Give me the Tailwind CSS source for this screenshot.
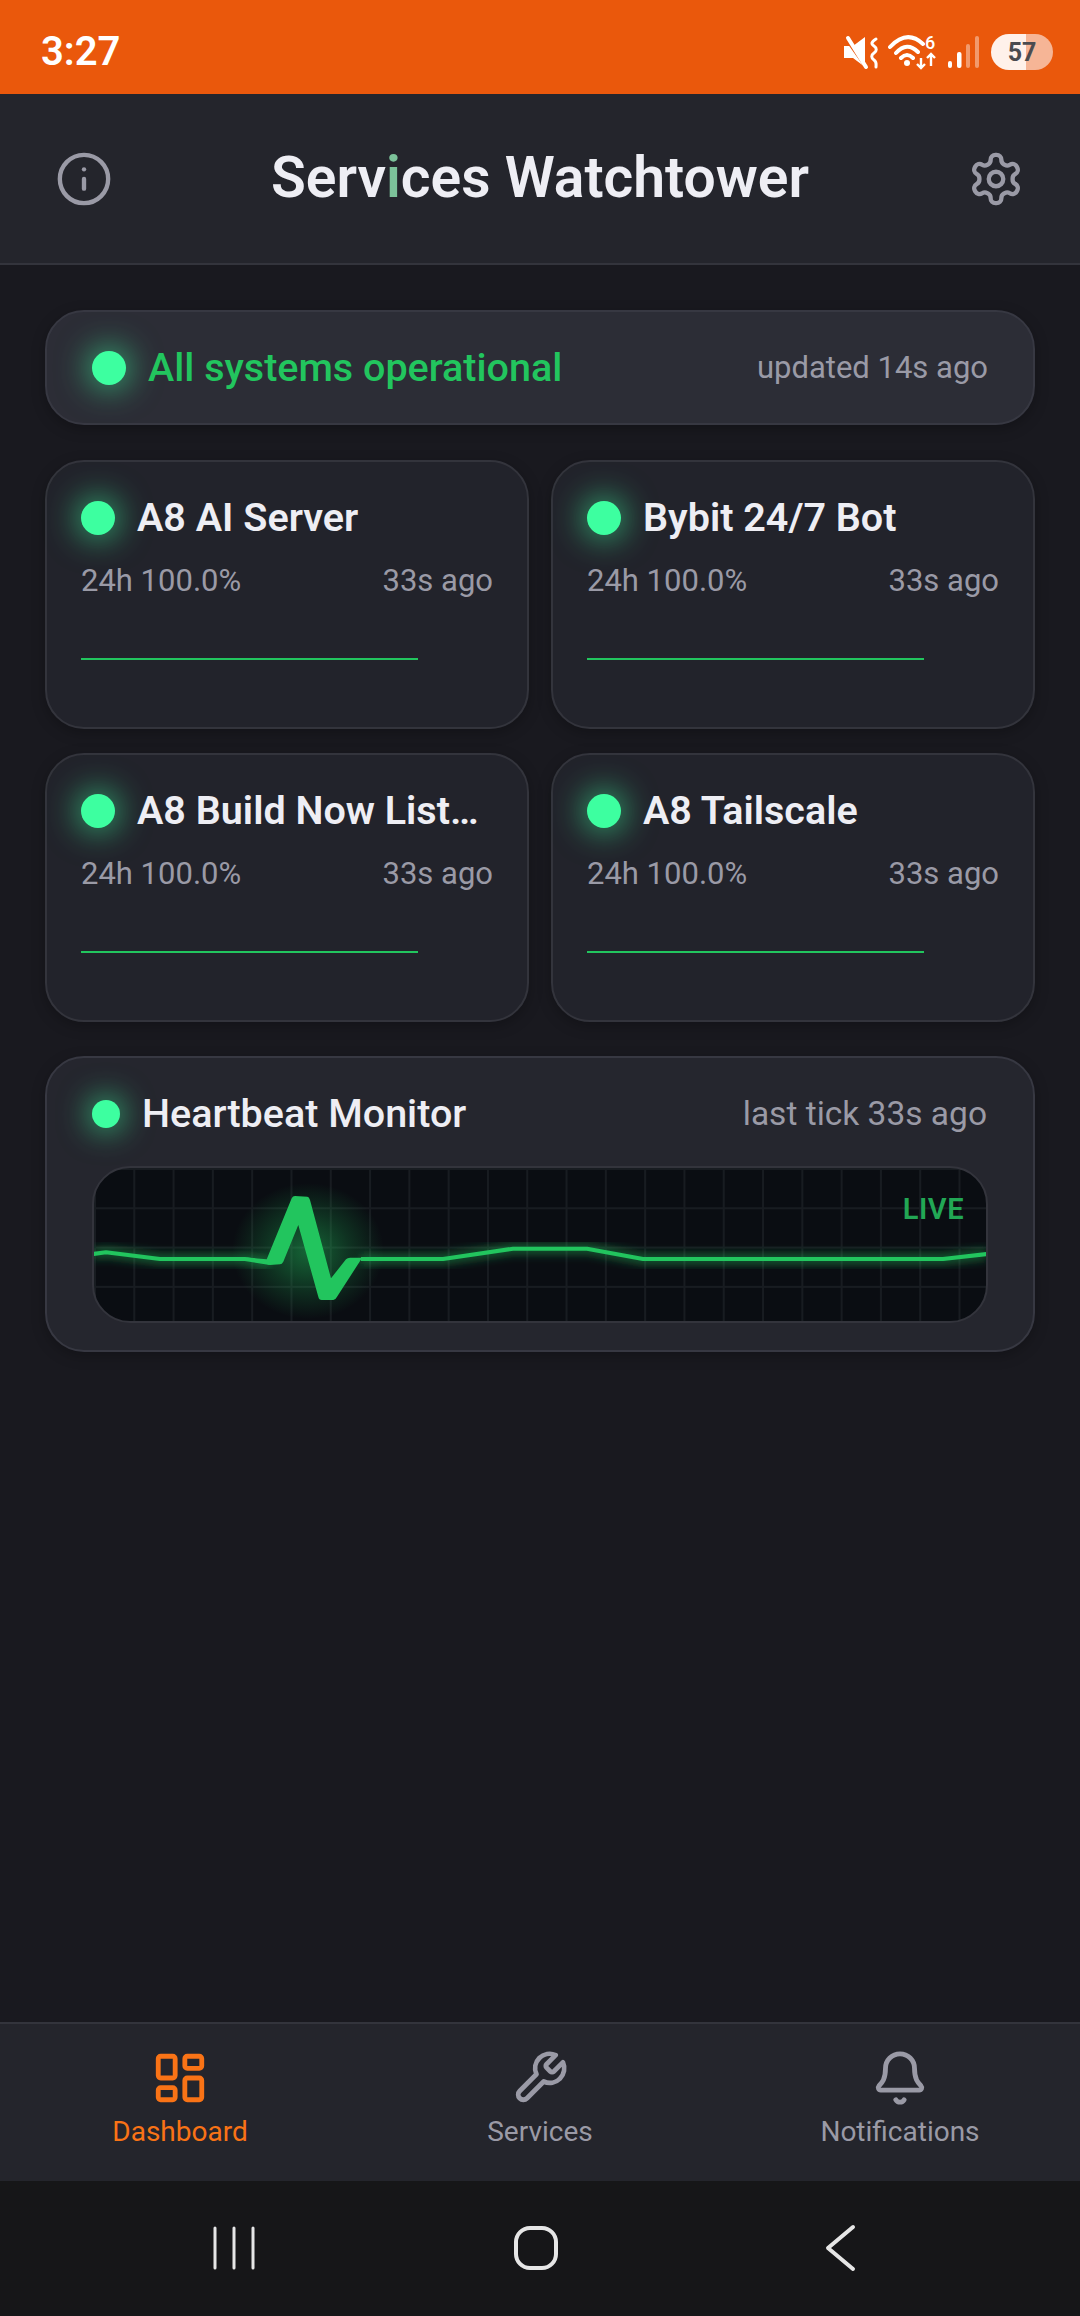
<!DOCTYPE html>
<html lang="en">
<head>
  <meta charset="UTF-8"/>
  <meta name="viewport" content="width=device-width, initial-scale=1.0"/>
  <title>Services Watchtower</title>
  <script src="https://cdn.jsdelivr.net/npm/@tailwindcss/browser@4"></script>
</head>
<body class="bg-[#19191f] font-['Roboto',sans-serif]">
<div class="flex flex-col w-[1080px] h-[2316px] overflow-hidden">

  <!-- status bar -->
  <div class="h-[94px] shrink-0 bg-[#ea580c] flex items-center justify-between pl-[41px] pr-[27px]">
    <span class="text-white text-[40px] font-semibold leading-none mt-[10px]">3:27</span>
    <div class="flex items-center gap-[8px] mt-[10px]">
      <svg width="140" height="44" viewBox="0 0 140 44" fill="none">
        <path d="M1 16h9l12-9v30l-12-9H1z" fill="#fff"/>
        <path d="M1 6l24 34" stroke="#ea580c" stroke-width="3"/>
        <path d="M5 8l18 29" stroke="#fff" stroke-width="4" stroke-linecap="round"/>
        <path d="M33 9c-5 3-5 5-2 7s3 5 0 7-3 5 0 7 2 4 2 7" stroke="#fff" stroke-width="3" stroke-linecap="round"/>
        <path d="M47 17Q64 -1 80 14M53 23Q64 11 75 22M58 28Q64 22 70 28" stroke="#fff" stroke-width="4" stroke-linecap="round"/>
        <circle cx="64" cy="33" r="3" fill="#fff"/>
        <text x="82" y="19" fill="#fff" font-size="18" font-weight="500" font-family="Roboto">6</text>
        <path d="M78 28v10M74 34l4 4 4-4M88 36V24M84 28l4-4 4 4" stroke="#fff" stroke-width="2.4"/>
        <rect x="105" y="31" width="4" height="7" rx="2" fill="#fff"/>
        <rect x="114" y="22" width="4.5" height="16" rx="2" fill="#fff"/>
        <rect x="123" y="14" width="4" height="24" rx="2" fill="#fff" fill-opacity=".4"/>
        <rect x="132" y="6" width="4" height="32" rx="2" fill="#fff" fill-opacity=".4"/>
      </svg>
      <div class="w-[62px] h-[36px] rounded-full bg-[linear-gradient(90deg,#fff1ea_56%,#f6b596_56%)] flex items-center justify-center text-[#4b4b4f] text-[25px] font-bold leading-none">57</div>
    </div>
  </div>

  <!-- header -->
  <div class="h-[171px] shrink-0 bg-[#24252c] border-b-2 border-[#33343c] flex items-center justify-between px-[55px]">
    <svg width="58" height="58" viewBox="0 0 24 24" fill="none" stroke="#9a9aa6" stroke-width="1.8" stroke-linecap="round" stroke-linejoin="round">
      <circle cx="12" cy="12" r="10"/><path d="M12 16v-4"/><path d="M12 8h.01"/>
    </svg>
    <h1 class="text-[#eeeef4] text-[57px] font-semibold leading-none mb-[2px]">Serv<span class="text-[#7cc29a]">i</span>ces Watchtower</h1>
    <svg width="58" height="58" viewBox="0 0 24 24" fill="none" stroke="#9a9aa6" stroke-width="1.8" stroke-linecap="round" stroke-linejoin="round">
      <path d="M12.22 2h-.44a2 2 0 0 0-2 2v.18a2 2 0 0 1-1 1.73l-.43.25a2 2 0 0 1-2 0l-.15-.08a2 2 0 0 0-2.73.73l-.22.38a2 2 0 0 0 .73 2.73l.15.1a2 2 0 0 1 1 1.72v.51a2 2 0 0 1-1 1.74l-.15.09a2 2 0 0 0-.73 2.73l.22.38a2 2 0 0 0 2.73.73l.15-.08a2 2 0 0 1 2 0l.43.25a2 2 0 0 1 1 1.73V20a2 2 0 0 0 2 2h.44a2 2 0 0 0 2-2v-.18a2 2 0 0 1 1-1.73l.43-.25a2 2 0 0 1 2 0l.15.08a2 2 0 0 0 2.73-.73l.22-.39a2 2 0 0 0-.73-2.73l-.15-.08a2 2 0 0 1-1-1.74v-.5a2 2 0 0 1 1-1.74l.15-.09a2 2 0 0 0 .73-2.73l-.22-.38a2 2 0 0 0-2.73-.73l-.15.08a2 2 0 0 1-2 0l-.43-.25a2 2 0 0 1-1-1.73V4a2 2 0 0 0-2-2z"/>
      <circle cx="12" cy="12" r="3"/>
    </svg>
  </div>

  <!-- dashboard -->
  <main class="flex-1 px-[45px] pt-[45px]">
    <div class="h-[115px] rounded-[39px] bg-[#2c2d36] border-2 border-[#373842] shadow-[0_4px_14px_rgba(0,0,0,0.25)] flex items-center justify-between pl-[45px] pr-[45px]">
      <div class="flex items-center gap-[22px]">
        <span class="w-[34px] h-[34px] rounded-full bg-[#3dffa0] shadow-[0_0_32px_4px_rgba(61,255,160,0.6)]"></span>
        <span class="text-[#22c55e] text-[39.5px] font-medium leading-none">All systems operational</span>
      </div>
      <span class="text-[#9a9aa6] text-[31px] leading-none">updated 14s ago</span>
    </div>

    <div class="grid grid-cols-2 gap-x-[22px] gap-y-[24px] mt-[35px]">
      <div class="h-[269px] rounded-[39px] bg-[#22232b] border-2 border-[#33343c] shadow-[0_4px_14px_rgba(0,0,0,0.25)] px-[34px] pt-[31px]">
        <div class="flex items-center gap-[22px] h-[50px]">
          <span class="w-[34px] h-[34px] shrink-0 rounded-full bg-[#3dffa0] shadow-[0_0_32px_4px_rgba(61,255,160,0.6)]"></span>
          <span class="text-[#eeeef4] text-[39.5px] font-semibold leading-none">A8 AI Server</span>
        </div>
        <div class="flex items-center justify-between h-[48px] mt-[14px] text-[#9a9aa6] text-[31px]">
          <span>24h 100.0%</span><span>33s ago</span>
        </div>
        <div class="w-[337px] h-[2px] bg-[#22c55e] mt-[53px]"></div>
      </div>
      <div class="h-[269px] rounded-[39px] bg-[#22232b] border-2 border-[#33343c] shadow-[0_4px_14px_rgba(0,0,0,0.25)] px-[34px] pt-[31px]">
        <div class="flex items-center gap-[22px] h-[50px]">
          <span class="w-[34px] h-[34px] shrink-0 rounded-full bg-[#3dffa0] shadow-[0_0_32px_4px_rgba(61,255,160,0.6)]"></span>
          <span class="text-[#eeeef4] text-[39.5px] font-semibold leading-none">Bybit 24/7 Bot</span>
        </div>
        <div class="flex items-center justify-between h-[48px] mt-[14px] text-[#9a9aa6] text-[31px]">
          <span>24h 100.0%</span><span>33s ago</span>
        </div>
        <div class="w-[337px] h-[2px] bg-[#22c55e] mt-[53px]"></div>
      </div>
      <div class="h-[269px] rounded-[39px] bg-[#22232b] border-2 border-[#33343c] shadow-[0_4px_14px_rgba(0,0,0,0.25)] px-[34px] pt-[31px]">
        <div class="flex items-center gap-[22px] h-[50px]">
          <span class="w-[34px] h-[34px] shrink-0 rounded-full bg-[#3dffa0] shadow-[0_0_32px_4px_rgba(61,255,160,0.6)]"></span>
          <span class="text-[#eeeef4] text-[39.5px] font-semibold leading-none whitespace-nowrap">A8 Build Now List…</span>
        </div>
        <div class="flex items-center justify-between h-[48px] mt-[14px] text-[#9a9aa6] text-[31px]">
          <span>24h 100.0%</span><span>33s ago</span>
        </div>
        <div class="w-[337px] h-[2px] bg-[#22c55e] mt-[53px]"></div>
      </div>
      <div class="h-[269px] rounded-[39px] bg-[#22232b] border-2 border-[#33343c] shadow-[0_4px_14px_rgba(0,0,0,0.25)] px-[34px] pt-[31px]">
        <div class="flex items-center gap-[22px] h-[50px]">
          <span class="w-[34px] h-[34px] shrink-0 rounded-full bg-[#3dffa0] shadow-[0_0_32px_4px_rgba(61,255,160,0.6)]"></span>
          <span class="text-[#eeeef4] text-[39.5px] font-semibold leading-none">A8 Tailscale</span>
        </div>
        <div class="flex items-center justify-between h-[48px] mt-[14px] text-[#9a9aa6] text-[31px]">
          <span>24h 100.0%</span><span>33s ago</span>
        </div>
        <div class="w-[337px] h-[2px] bg-[#22c55e] mt-[53px]"></div>
      </div>
    </div>

    <!-- heartbeat -->
    <div class="h-[296px] mt-[34px] rounded-[39px] bg-[#25262e] border-2 border-[#373842] shadow-[0_4px_14px_rgba(0,0,0,0.25)] px-[45px] pt-[31px]">
      <div class="flex items-center justify-between h-[50px]">
        <div class="flex items-center gap-[22px]">
          <span class="w-[28px] h-[28px] rounded-full bg-[#3dffa0] shadow-[0_0_30px_4px_rgba(61,255,160,0.6)]"></span>
          <span class="text-[#eeeef4] text-[39.5px] font-medium leading-none">Heartbeat Monitor</span>
        </div>
        <span class="text-[#9a9aa6] text-[33.5px] leading-none mr-[1px]">last tick 33s ago</span>
      </div>
      <div class="relative h-[157px] mt-[27px] rounded-[38px] overflow-hidden border-2 border-[#33343c] bg-[#0a0d12] bg-[linear-gradient(90deg,#181c21_2px,transparent_2px),linear-gradient(0deg,transparent_37.3px,#181c21_37.3px)] bg-[size:39.3px_39.3px]">
        <svg class="absolute left-[-1px] top-[-2px]" width="894" height="157" viewBox="0 0 894 157" fill="none">
          <defs>
            <radialGradient id="spikeGlow">
              <stop offset="0" stop-color="#22c55e" stop-opacity=".48"/>
              <stop offset=".55" stop-color="#22c55e" stop-opacity=".2"/>
              <stop offset="1" stop-color="#22c55e" stop-opacity="0"/>
            </radialGradient>
            <filter id="lineGlow" x="-5%" y="-40%" width="110%" height="180%">
              <feGaussianBlur stdDeviation="5"/>
            </filter>
          </defs>
          <ellipse cx="215" cy="85" rx="76" ry="68" fill="url(#spikeGlow)"/>
          <g id="trace">
            <path d="M0 88L13 86.3L67 93H152L177 97M268 93H350L420 82.7H494L550 93H850L894 88" stroke="#22c55e" stroke-width="10" stroke-opacity=".45" filter="url(#lineGlow)"/>
            <path d="M0 88L13 86.3L67 93H152L177 97M268 93H350L420 82.7H494L550 93H850L894 88" stroke="#22c55e" stroke-width="4" stroke-linejoin="round"/>
            <path d="M152 91.3L173.7 93.3L198.7 32.3Q199.7 30 202 30L214.3 30.7Q216 30.7 217 34L238 112.3L253 93.3Q254.5 91.7 257 91.7H268.7V92.5L243.7 131.3Q242.5 134 240.3 134H228.7Q226 134 225.3 130.7L205.3 59L190.3 95.7Q189 98.3 187 98.3L177 99Z" fill="#22c55e"/>
          </g>
        </svg>
        <span class="absolute right-[22px] top-[27px] text-[#22a755] text-[29px] font-semibold leading-none tracking-[0.5px]">LIVE</span>
      </div>
    </div>
  </main>

  <!-- bottom nav -->
  <nav class="h-[159px] shrink-0 bg-[#24252c] border-t-2 border-[#33343c] grid grid-cols-3 text-[28px]">
    <div class="flex flex-col items-center pt-[25px] text-[#f97316]">
      <svg width="58" height="58" viewBox="0 0 24 24" fill="none" stroke="currentColor" stroke-width="2" stroke-linecap="round" stroke-linejoin="round">
        <rect width="7" height="9" x="3" y="3" rx="1"/><rect width="7" height="5" x="14" y="3" rx="1"/><rect width="7" height="9" x="14" y="12" rx="1"/><rect width="7" height="5" x="3" y="16" rx="1"/>
      </svg>
      <span class="mt-[8px] leading-[34px]">Dashboard</span>
    </div>
    <div class="flex flex-col items-center pt-[25px] text-[#9a9aa6]">
      <svg width="58" height="58" viewBox="0 0 24 24" fill="none" stroke="currentColor" stroke-width="2" stroke-linecap="round" stroke-linejoin="round">
        <path d="M14.7 6.3a1 1 0 0 0 0 1.4l1.6 1.6a1 1 0 0 0 1.4 0l3.77-3.77a6 6 0 0 1-7.94 7.94l-6.91 6.91a2.12 2.12 0 0 1-3-3l6.91-6.91a6 6 0 0 1 7.94-7.94l-3.76 3.76z"/>
      </svg>
      <span class="mt-[8px] leading-[34px]">Services</span>
    </div>
    <div class="flex flex-col items-center pt-[25px] text-[#9a9aa6]">
      <svg width="58" height="58" viewBox="0 0 24 24" fill="none" stroke="currentColor" stroke-width="2" stroke-linecap="round" stroke-linejoin="round">
        <path d="M10.268 21a2 2 0 0 0 3.464 0"/>
        <path d="M3.262 15.326A1 1 0 0 0 4 17h16a1 1 0 0 0 .74-1.673C19.41 13.956 18 12.499 18 8A6 6 0 0 0 6 8c0 4.499-1.411 5.956-2.738 7.326"/>
      </svg>
      <span class="mt-[8px] leading-[34px]">Notifications</span>
    </div>
  </nav>

  <!-- system nav -->
  <div class="h-[135px] shrink-0 bg-[#161618] grid grid-cols-3 items-center pb-[2px]">
    <div class="flex justify-center">
      <svg class="ml-[108px]" width="44" height="44" viewBox="0 0 44 44" stroke="#e6e6e6" stroke-width="3" stroke-linecap="round">
        <path d="M3 2v40M22 2v40M41 2v40"/>
      </svg>
    </div>
    <div class="flex justify-center">
      <svg class="ml-[-8px]" width="48" height="48" viewBox="0 0 48 48" fill="none" stroke="#e6e6e6" stroke-width="4">
        <rect x="4" y="4" width="40" height="40" rx="14"/>
      </svg>
    </div>
    <div class="flex justify-center">
      <svg class="ml-[-121px]" width="32" height="48" viewBox="0 0 32 48" fill="none" stroke="#e6e6e6" stroke-width="4" stroke-linecap="round" stroke-linejoin="round">
        <path d="M29 3L4 24L29 45"/>
      </svg>
    </div>
  </div>
</div>
</body>
</html>
